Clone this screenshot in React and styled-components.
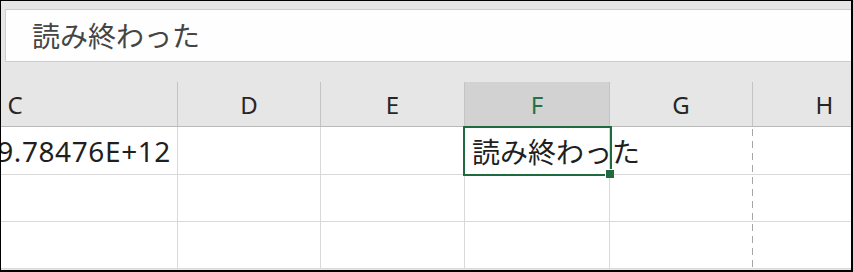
import React from 'react'
import styled, { createGlobalStyle } from 'styled-components'

const GlobalStyle = createGlobalStyle`
  html, body {
    margin: 0;
    padding: 0;
    background: #ffffff;
  }
`

const CJK = `"Noto Sans CJK JP", "Noto Sans", sans-serif`

const Frame = styled.div`
  width: 853px;
  height: 272px;
  box-sizing: border-box;
  border-style: solid;
  border-color: #000;
  border-width: 1px 2px 2px 1px;
  background: #e6e6e6;
  overflow: hidden;
  display: flex;
  flex-direction: column;
`

const FormulaArea = styled.div`
  padding: 8px 0 0 4px;
`

const FormulaBox = styled.div`
  height: 53px;
  box-sizing: border-box;
  background: #fefefe;
  border: 1px solid #cdcdcd;
  border-right: none;
  padding-left: 26px;
  font-family: ${CJK};
  font-size: 28px;
  line-height: 50px;
  color: #454545;
`

const Sheet = styled.div`
  margin-top: 20px;
  margin-left: -148px;
`

const Row = styled.div`
  display: grid;
  grid-template-columns: 325px 143px 144px 145px 143px 144px;
  height: ${p => p.$height}px;
  box-sizing: border-box;
  background: ${p => (p.$header ? '#e6e6e6' : '#ffffff')};
  border-bottom: 1px solid ${p => (p.$header ? '#bababa' : '#d9d9d9')};
`

const HeadCell = styled.div`
  display: flex;
  align-items: center;
  justify-content: center;
  box-sizing: border-box;
  border-right: 1px solid #c4c4c4;
  background: ${p => (p.$active ? '#d2d2d2' : 'transparent')};
  color: ${p => (p.$active ? '#217346' : '#262626')};
  font-family: "Noto Sans", sans-serif;
  font-size: 24px;
`

const Cell = styled.div`
  position: relative;
  display: flex;
  align-items: center;
  justify-content: ${p => (p.$right ? 'flex-end' : 'flex-start')};
  padding: ${p => (p.$right ? '0 6px 0 0' : '0 0 0 7px')};
  box-sizing: border-box;
  border-right: ${p => (p.$pageBreak ? 'none' : '1px solid #d9d9d9')};
  background-image: ${p =>
    p.$pageBreak
      ? 'linear-gradient(to bottom, #a6a6a6 0, #a6a6a6 7px, transparent 7px)'
      : 'none'};
  background-size: 1px 12px;
  background-repeat: repeat-y;
  background-position: right 2px;
  font-family: ${CJK};
  font-size: 28px;
  color: #1f1f1f;
  white-space: nowrap;
  overflow: visible;
  z-index: ${p => (p.$active ? 2 : 'auto')};
`

const Number = styled.span`
  font-family: "Noto Sans", sans-serif;
  font-size: 28px;
  letter-spacing: 0.6px;
`

const Selection = styled.div`
  position: absolute;
  left: -2px;
  right: -3px;
  top: -1px;
  bottom: -2px;
  border: 2px solid #1d6b3e;
  pointer-events: none;
`

const FillHandle = styled.div`
  position: absolute;
  right: -4px;
  bottom: -4px;
  width: 8px;
  height: 8px;
  background: #1d6b3e;
  border-left: 1px solid #fff;
  border-top: 1px solid #fff;
`

const columns = ['C', 'D', 'E', 'F', 'G', 'H']

const App = () => (
  <>
    <GlobalStyle />
    <Frame>
      <FormulaArea>
        <FormulaBox>読み終わった</FormulaBox>
      </FormulaArea>
      <Sheet>
        <Row $header $height={45}>
          {columns.map(c => (
            <HeadCell key={c} $active={c === 'F'}>{c}</HeadCell>
          ))}
        </Row>
        <Row $height={48}>
          <Cell $right><Number>9.78476E+12</Number></Cell>
          <Cell />
          <Cell />
          <Cell $active>
            読み終わった
            <Selection>
              <FillHandle />
            </Selection>
          </Cell>
          <Cell $pageBreak />
          <Cell />
        </Row>
        {[0, 1].map(i => (
          <Row key={i} $height={47}>
            {columns.map(c => (
              <Cell key={c} $pageBreak={c === 'G'} />
            ))}
          </Row>
        ))}
      </Sheet>
    </Frame>
  </>
)

export default App
